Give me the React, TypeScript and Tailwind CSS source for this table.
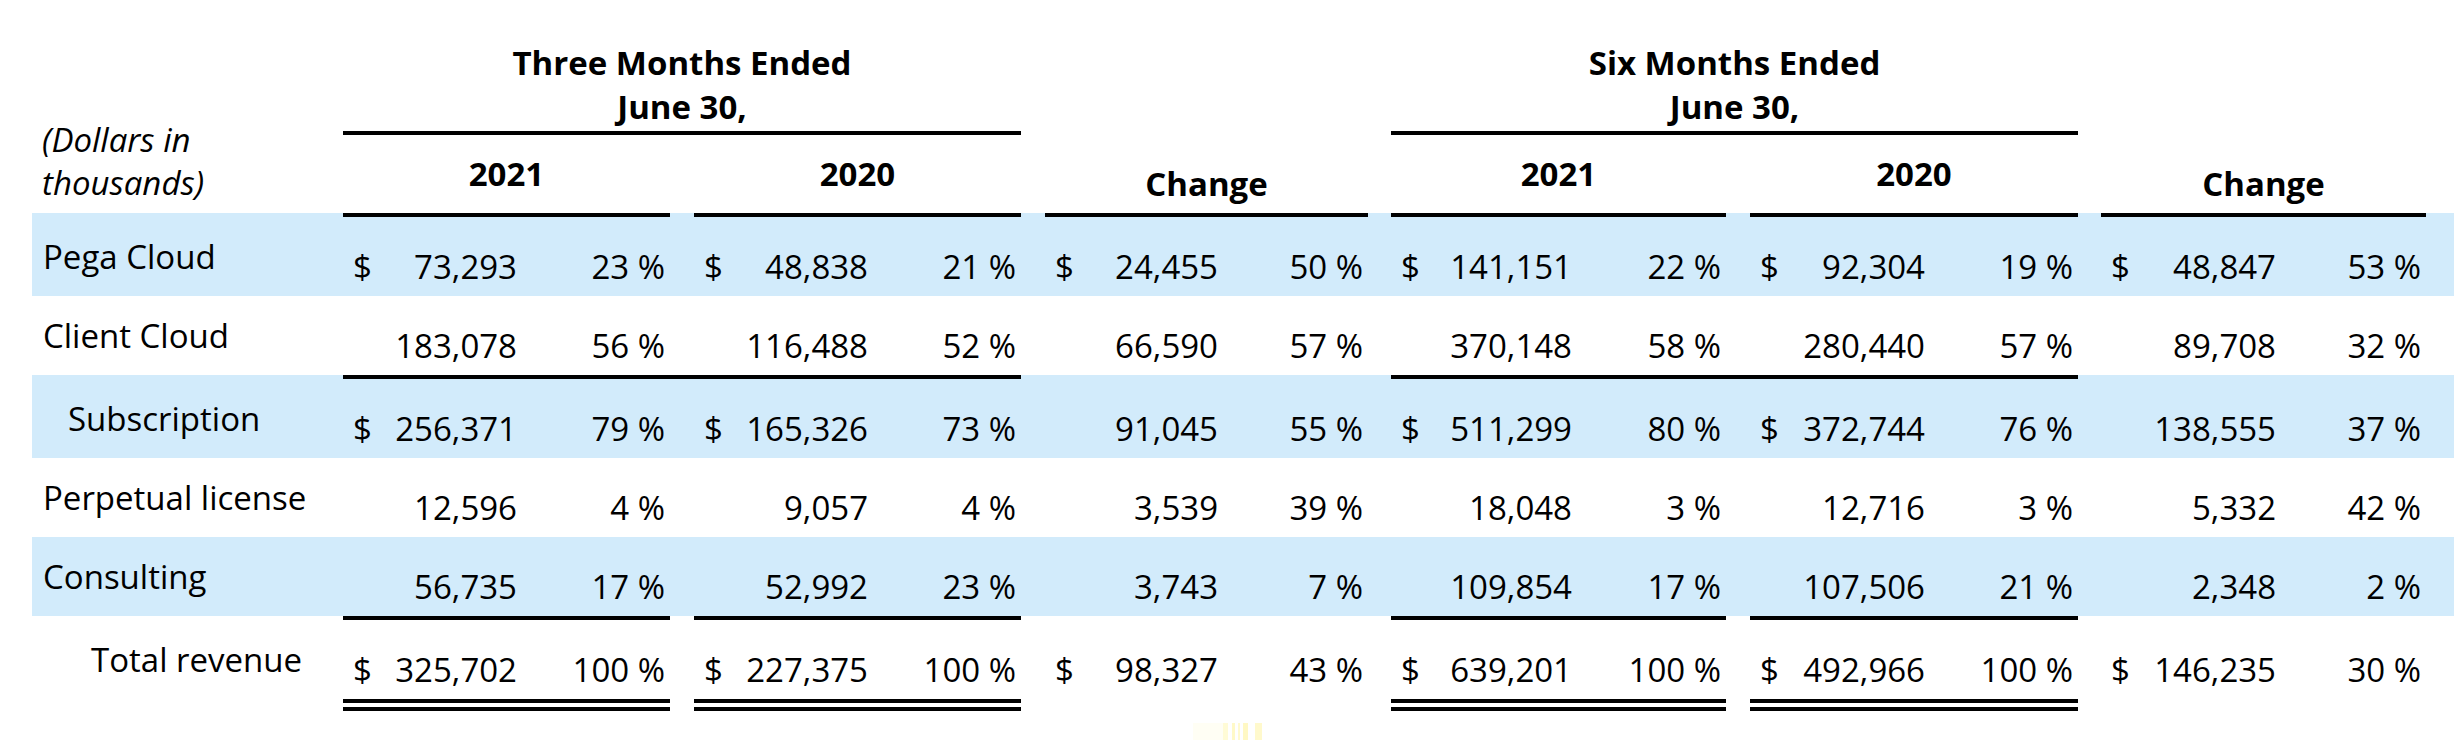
import React from "react";

const COLS =
  "grid-cols-[311px_327px_24px_327px_24px_323px_23px_335px_24px_328px_23px_325px]";

const INNER = [
  "grid-cols-[32px_142px_1fr]",
  "grid-cols-[32px_142px_1fr]",
  "grid-cols-[32px_141px_1fr]",
  "grid-cols-[32px_149px_1fr]",
  "grid-cols-[32px_143px_1fr]",
  "grid-cols-[32px_143px_1fr]",
];

type TopLine = "none" | "all" | "cont" | "sep";

type RowData = {
  label: string;
  indent: string;
  blue: boolean;
  top: TopLine;
  dollars: boolean[];
  vals: [string, string][];
};

const rows: RowData[] = [
  {
    label: "Pega Cloud",
    indent: "pl-[11px]",
    blue: true,
    top: "all",
    dollars: [true, true, true, true, true, true],
    vals: [
      ["73,293", "23 %"],
      ["48,838", "21 %"],
      ["24,455", "50 %"],
      ["141,151", "22 %"],
      ["92,304", "19 %"],
      ["48,847", "53 %"],
    ],
  },
  {
    label: "Client Cloud",
    indent: "pl-[11px]",
    blue: false,
    top: "none",
    dollars: [false, false, false, false, false, false],
    vals: [
      ["183,078", "56 %"],
      ["116,488", "52 %"],
      ["66,590", "57 %"],
      ["370,148", "58 %"],
      ["280,440", "57 %"],
      ["89,708", "32 %"],
    ],
  },
  {
    label: "Subscription",
    indent: "pl-[36px]",
    blue: true,
    top: "cont",
    dollars: [true, true, false, true, true, false],
    vals: [
      ["256,371", "79 %"],
      ["165,326", "73 %"],
      ["91,045", "55 %"],
      ["511,299", "80 %"],
      ["372,744", "76 %"],
      ["138,555", "37 %"],
    ],
  },
  {
    label: "Perpetual license",
    indent: "pl-[11px]",
    blue: false,
    top: "none",
    dollars: [false, false, false, false, false, false],
    vals: [
      ["12,596", "4 %"],
      ["9,057", "4 %"],
      ["3,539", "39 %"],
      ["18,048", "3 %"],
      ["12,716", "3 %"],
      ["5,332", "42 %"],
    ],
  },
  {
    label: "Consulting",
    indent: "pl-[11px]",
    blue: true,
    top: "none",
    dollars: [false, false, false, false, false, false],
    vals: [
      ["56,735", "17 %"],
      ["52,992", "23 %"],
      ["3,743", "7 %"],
      ["109,854", "17 %"],
      ["107,506", "21 %"],
      ["2,348", "2 %"],
    ],
  },
  {
    label: "Total revenue",
    indent: "pl-[59px]",
    blue: false,
    top: "sep",
    dollars: [true, true, true, true, true, true],
    vals: [
      ["325,702", "100 %"],
      ["227,375", "100 %"],
      ["98,327", "43 %"],
      ["639,201", "100 %"],
      ["492,966", "100 %"],
      ["146,235", "30 %"],
    ],
  },
];

// 12 grid columns: 0 label, 1 A, 2 sp, 3 B, 4 sp, 5 C, 6 sp, 7 D, 8 sp, 9 E, 10 sp, 11 F
function lineOn(top: TopLine, col: number): boolean {
  if (top === "all") return [1, 3, 5, 7, 9, 11].includes(col);
  if (top === "cont") return [1, 2, 3, 7, 8, 9].includes(col);
  if (top === "sep") return [1, 3, 7, 9].includes(col);
  return false;
}

function Row({ r }: { r: RowData }) {
  const hasTop = r.top !== "none";
  const bt = (col: number) =>
    hasTop
      ? lineOn(r.top, col)
        ? "border-t-4 border-t-black"
        : "border-t-4 border-t-transparent"
      : "";
  const cells: React.ReactNode[] = [];
  cells.push(
    <div key="label" className={`${r.indent} pt-[18px] ${bt(0)}`}>
      {r.label}
    </div>
  );
  for (let b = 0; b < 6; b++) {
    const col = 1 + b * 2;
    cells.push(
      <div key={`b${b}`} className={`grid ${INNER[b]} ${bt(col)}`}>
        <div className="pl-[10px] pt-[28px]">{r.dollars[b] ? "$" : ""}</div>
        <div className="text-right pt-[28px]">{r.vals[b][0]}</div>
        <div className="text-right pr-[5px] pt-[28px]">{r.vals[b][1]}</div>
      </div>
    );
    if (b < 5) {
      cells.push(<div key={`s${b}`} className={bt(col + 1)} />);
    }
  }
  return (
    <div
      className={`grid ${COLS} ${hasTop ? "grid-rows-[83px]" : "grid-rows-[79px]"} ${
        r.blue ? "bg-[#d2ebfb]" : "bg-white"
      }`}
    >
      {cells}
    </div>
  );
}

export default function App() {
  return (
    <div className="w-[2454px] h-[740px] bg-white pl-[32px] text-black font-['Open_Sans','Noto_Sans',sans-serif] text-[33px] leading-[44px] overflow-hidden">
      {/* Header */}
      <div className={`grid ${COLS} grid-rows-[135px_78px]`}>
        <div className="col-start-1 row-start-1 row-span-2 flex flex-col justify-end pb-[9px] pl-[10px] italic leading-[43px]">
          <span>(Dollars in</span>
          <span>thousands)</span>
        </div>
        <div className="col-start-2 col-span-3 row-start-1 flex flex-col items-center justify-end border-b-4 border-black pb-[2px] font-bold">
          <span>Three Months Ended</span>
          <span>June 30,</span>
        </div>
        <div className="col-start-8 col-span-3 row-start-1 flex flex-col items-center justify-end border-b-4 border-black pb-[2px] font-bold">
          <span>Six Months Ended</span>
          <span>June 30,</span>
        </div>
        <div className="col-start-2 row-start-2 flex items-end justify-center pb-[17px] font-bold">2021</div>
        <div className="col-start-4 row-start-2 flex items-end justify-center pb-[17px] font-bold">2020</div>
        <div className="col-start-6 row-start-2 flex items-end justify-center pb-[7px] font-bold">Change</div>
        <div className="col-start-8 row-start-2 flex items-end justify-center pb-[17px] font-bold">2021</div>
        <div className="col-start-10 row-start-2 flex items-end justify-center pb-[17px] font-bold">2020</div>
        <div className="col-start-12 row-start-2 flex items-end justify-center pb-[7px] font-bold">Change</div>
      </div>

      {/* Body */}
      {rows.map((r) => (
        <Row key={r.label} r={r} />
      ))}

      {/* Double underline under totals */}
      <div className={`grid ${COLS} grid-rows-[12px]`}>
        <div />
        <div className="border-y-4 border-black" />
        <div />
        <div className="border-y-4 border-black" />
        <div />
        <div />
        <div />
        <div className="border-y-4 border-black" />
        <div />
        <div className="border-y-4 border-black" />
        <div />
        <div />
      </div>

      {/* faint yellow artifact below the table */}
      <div className="mt-[12px] ml-[1161px] flex h-[17px] w-[70px]">
        <div className="w-[30px] bg-[#fffef4]" />
        <div className="w-[5px] bg-[#fffbd6]" />
        <div className="w-[4px] bg-white" />
        <div className="w-[3px] bg-[#fff9c8]" />
        <div className="w-[3px] bg-white" />
        <div className="w-[2px] bg-[#fffad0]" />
        <div className="w-[3px] bg-white" />
        <div className="w-[5px] bg-[#fff8c4]" />
        <div className="w-[7px] bg-white" />
        <div className="w-[7px] bg-[#fff9cc]" />
      </div>
    </div>
  );
}
